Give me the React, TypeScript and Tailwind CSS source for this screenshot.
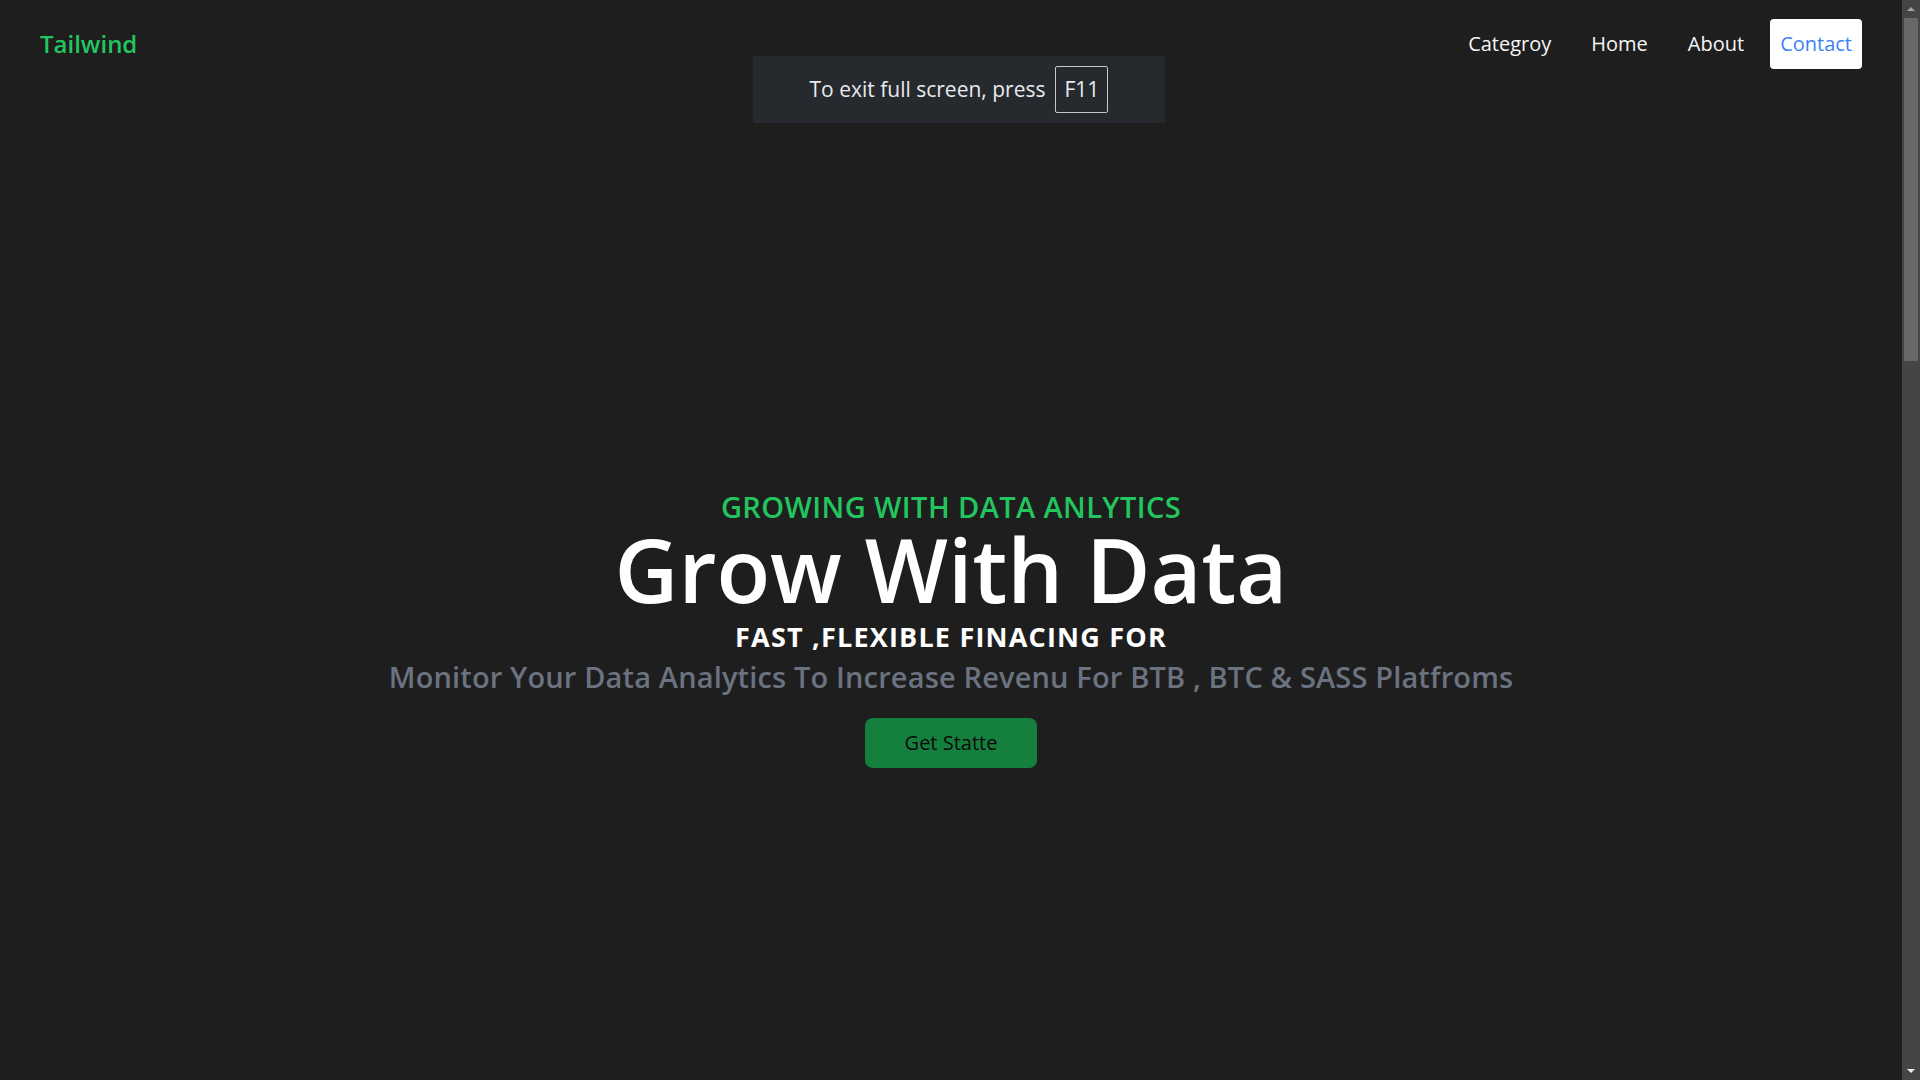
import React from "react"

const navLinks = ["Categroy", "Home", "About"]

// fullscreen notice the browser drew on top of the page
const ExitNotice = () => (
  <div className="absolute left-[753px] top-[56px] flex h-[67px] w-[412px] items-center justify-center gap-[10px] bg-[#26292e] text-[#e8eaed]">
    <span className="text-[21px] leading-none">To exit full screen, press</span>
    <span className="flex h-[47px] w-[53px] items-center justify-center rounded-[2px] border border-[#c4c7cc] text-[21px] leading-none">
      F11
    </span>
  </div>
)

// dark window scrollbar, page is about three screens tall
const ScrollBar = () => (
  <aside className="flex h-screen w-[18px] shrink-0 flex-col bg-[#454545]">
    <div className="flex h-[18px] items-center justify-center">
      <svg width="8" height="4" viewBox="0 0 8 4">
        <polygon points="0,4 4,0 8,4" fill="#a3a3a3" />
      </svg>
    </div>
    <div className="mx-[2px] h-[343px] bg-[#686868]" />
    <div className="mt-auto flex h-[18px] items-center justify-center">
      <svg width="8" height="4" viewBox="0 0 8 4">
        <polygon points="0,0 8,0 4,4" fill="#f0f0f0" />
      </svg>
    </div>
  </aside>
)

const Header = () => (
  <header className="flex h-[88px] items-center justify-between px-10">
    <a href="#" className="-mt-[1px] text-[24px] font-semibold leading-none text-[#22c55e]">
      Tailwind
    </a>
    <nav>
      <ul className="flex items-center gap-[12px]">
        {navLinks.map((link) => (
          <li key={link}>
            <a href="#" className="block px-[14px] pb-[1px] text-[20px] leading-none text-neutral-100">
              {link}
            </a>
          </li>
        ))}
        <li>
          <a
            href="#"
            className="flex h-[50px] items-center rounded-[4px] bg-white px-[10px] pb-[1px] text-[20px] leading-none text-[#3b82f6]"
          >
            Contact
          </a>
        </li>
      </ul>
    </nav>
  </header>
)

const Hero = () => (
  <section className="flex flex-col items-center pt-[404px] text-center">
    <h3 className="text-[29px] font-semibold uppercase leading-none tracking-[0.4px] text-[#22c55e]">
      Growing with data anlytics
    </h3>
    <h1 className="mt-[4px] text-[88px] font-semibold leading-none text-white">
      Grow With Data
    </h1>
    <h2 className="mt-[10px] text-[27px] font-bold uppercase leading-none tracking-[1.2px] text-white">
      Fast ,flexible finacing for
    </h2>
    <p className="mt-[12px] text-[29px] font-semibold leading-none tracking-[0.15px] text-[#6b7280]">
      Monitor Your Data Analytics To Increase Revenu For BTB , BTC &amp; SASS Platfroms
    </p>
    <button className="mt-[27px] flex h-[50px] w-[172px] items-center justify-center rounded-lg bg-[#15803d] text-[20px] leading-none text-neutral-950">
      Get Statte
    </button>
  </section>
)

export default function App() {
  return (
    <div className="relative flex h-screen overflow-hidden bg-[#1e1e1e] font-['Open_Sans',sans-serif]">
      <main className="min-w-0 flex-1">
        <Header />
        <Hero />
      </main>
      <ScrollBar />
      <ExitNotice />
    </div>
  )
}
